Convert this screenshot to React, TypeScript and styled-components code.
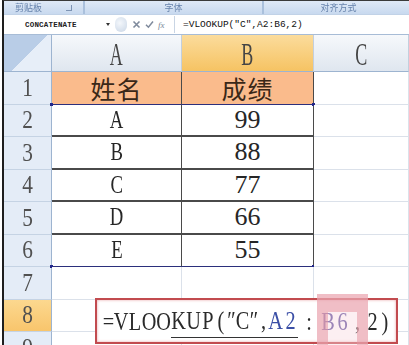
import styled, { createGlobalStyle } from 'styled-components';

const GlobalStyle = createGlobalStyle`
  html, body { margin: 0; padding: 0; background: #fff; overflow: hidden; }
  body { font-family: "Liberation Serif", "DejaVu Serif", serif; }
`;

const Frame = styled.div`
  width: 407px;
  height: 345px;
  margin-left: 2px;
  box-sizing: border-box;
  border-left: 2px solid #1e1e1e;
  border-top: 1px solid #3a3a3a;
  overflow: hidden;
  display: flex;
  flex-direction: column;
  font-family: "Liberation Serif", "DejaVu Serif", serif;
`;

const Ribbon = styled.div`
  height: 13px;
  flex: none;
  display: flex;
  background: linear-gradient(#dfe9f6, #c8d9ef);
`;

const Group = styled.div<{ $w: number }>`
  width: ${({ $w }) => $w}px;
  flex: none;
  display: flex;
  align-items: center;
  justify-content: center;
  border-right: 2px solid #aac0dc;
  font: 9px "Noto Sans CJK SC", sans-serif;
  color: #6783ac;
  filter: blur(0.5px);
`;

const Launcher = styled.span`
  margin-left: 24px;
  width: 5px;
  height: 5px;
  border-right: 1px solid #7d93b3;
  border-bottom: 1px solid #7d93b3;
`;

const FormulaBar = styled.div`
  height: 19px;
  flex: none;
  display: flex;
  align-items: center;
  background: #fff;
  border-top: 1px solid #c1d2e7;
  border-bottom: 1px solid #a7bcd6;
`;

const NameBox = styled.div`
  width: 81px;
  padding-left: 21px;
  font: bold 7.5px "Liberation Mono", monospace;
  color: #222;
  letter-spacing: 0.2px;
`;

const DropArrow = styled.span`
  width: 0;
  height: 0;
  border-left: 2.5px solid transparent;
  border-right: 2.5px solid transparent;
  border-top: 3px solid #333;
  margin-right: 5px;
`;

const Grip = styled.span`
  width: 12px;
  height: 15px;
  border-radius: 7px;
  background: radial-gradient(circle at 40% 40%, #f4f7fb, #c9d6e6);
  margin-right: 5px;
`;

const ToolIcon = styled.svg`
  flex: none;
  margin-right: 4px;
`;

const Fx = styled.span`
  font: italic 9px "Liberation Serif", serif;
  color: #7a8799;
  width: 12px;
  padding-right: 4px;
  border-right: 1px solid #c9d5e4;
  height: 17px;
  display: flex;
  align-items: center;
`;

const FormulaText = styled.div`
  padding-left: 8px;
  font: 9.5px "Liberation Mono", monospace;
  color: #111;
`;

const Sheet = styled.div`
  position: relative;
  flex: none;
  display: grid;
  grid-template-columns: 48px 130px 132px 1fr;
  grid-template-rows: 37px repeat(9, 32.5px);
`;

const Corner = styled.div`
  background: linear-gradient(135deg, #b9cde7 0 52%, #e7eef8 52% 100%);
  border-right: 1px solid #9db4d0;
  border-bottom: 1px solid #9db4d0;
`;

const ColHead = styled.div<{ $active?: boolean }>`
  display: flex;
  align-items: center;
  justify-content: center;
  background: ${({ $active }) =>
    $active ? 'linear-gradient(#fbdc9c, #f6c363)' : 'linear-gradient(#f6f8fb, #dfe6ef)'};
  border-right: 1px solid #c3cfdd;
  border-bottom: 1px solid #9db4d0;
  color: #454545;
  font-size: 31px;
  line-height: 1;
  padding-top: 2px;
  box-sizing: border-box;
`;

const RowHead = styled.div<{ $active?: boolean }>`
  display: flex;
  align-items: center;
  justify-content: center;
  background: ${({ $active }) => ($active ? 'linear-gradient(#fcd88f, #f8c56c)' : '#e4ecf7')};
  border-right: 1px solid #9db4d0;
  border-bottom: 1px solid #c5d3e4;
  color: #505050;
  font-size: 26px;
  line-height: 1;
`;

const lineColor = { navy: '#2b2f7c', dark: '#4a4a4a', grid: '#dbe1ea' };

const Cell = styled.div<{ $fill?: boolean; $right: keyof typeof lineColor; $bottom: keyof typeof lineColor }>`
  position: relative;
  display: flex;
  align-items: center;
  justify-content: center;
  background: ${({ $fill }) => ($fill ? '#fabb8c' : '#fff')};
  border-right: 1px solid ${({ $right }) => lineColor[$right]};
  border-bottom: ${({ $bottom }) => ($bottom === 'dark' ? 2 : 1)}px solid ${({ $bottom }) => lineColor[$bottom]};
  color: #262626;
  font-size: 26px;
  line-height: 1;
`;

const Narrow = styled.span<{ $scale: number }>`
  display: inline-block;
  transform: scaleX(${({ $scale }) => $scale});
`;

const Han = styled.span`
  font: 25px "Noto Sans CJK SC", sans-serif;
  color: #3a2818;
  letter-spacing: 1px;
`;

const Dot = styled.span<{ $top?: boolean; $left?: boolean }>`
  position: absolute;
  width: 3px;
  height: 3px;
  background: #23278a;
  ${({ $top }) => ($top ? 'top: -2px;' : 'bottom: -2px;')}
  ${({ $left }) => ($left ? 'left: -2px;' : 'right: -2px;')}
`;

const Callout = styled.div`
  position: absolute;
  left: 91px;
  top: 263px;
  width: 303px;
  height: 46px;
  box-sizing: border-box;
  border: 2px solid #c24b4f;
  box-shadow: inset 0 0 3px #e9a5a8;
  background: #fff;
  display: flex;
  align-items: center;
  padding: 2px 0 0 6px;
  font-size: 26px;
  color: #2a2a2a;
  white-space: nowrap;
`;

const Glyph = styled.span<{ $w: number; $color?: string }>`
  display: inline-flex;
  justify-content: center;
  width: ${({ $w }) => $w}px;
  transform: scaleX(0.78);
  color: ${({ $color }) => $color || 'inherit'};
`;

const Underlined = styled.span`
  border-bottom: 1px solid #333;
  padding-bottom: 1px;
`;

const Stamp = styled.div`
  position: absolute;
  left: 313px;
  top: 259px;
  width: 29px;
  height: 40px;
  border: solid rgba(230, 150, 162, 0.55);
  border-width: 18px 11px 0 11px;
  background: rgba(247, 214, 222, 0.4);
`;

const rows = [
  { n: '1', a: '姓名', b: '成绩', title: true },
  { n: '2', a: 'A', b: '99' },
  { n: '3', a: 'B', b: '88' },
  { n: '4', a: 'C', b: '77' },
  { n: '5', a: 'D', b: '66' },
  { n: '6', a: 'E', b: '55' },
  { n: '7' },
  { n: '8', active: true },
  { n: '9' },
];

const formula: [string, number, string?][] = [
  ['=', 11], ['V', 14], ['L', 14], ['O', 14], ['O', 15], ['K', 15], ['U', 15], ['P', 14],
  ['(', 12], ['″', 9], ['C', 13], ['″', 10], [',', 9],
  ['A', 15, '#3b4fa6'], ['2', 15, '#3b4fa6'], [':', 22],
  ['B', 16, '#5f4f9e'], ['6', 13, '#5f4f9e'], [',', 17], ['2', 13], [')', 12],
];

const renderGlyphs = (from: number, to: number) =>
  formula.slice(from, to).map(([ch, w, color], i) => (
    <Glyph key={from + i} $w={w} $color={color}>
      {ch}
    </Glyph>
  ));

const bottomOf = (i: number, inTable: boolean) => {
  if (!inTable) return 'grid' as const;
  return i === 0 || i === 5 ? ('navy' as const) : ('dark' as const);
};

const App = () => (
  <>
    <GlobalStyle />
    <Frame>
      <Ribbon>
        <Group $w={79}>
          剪贴板
          <Launcher />
        </Group>
        <Group $w={177}>字体</Group>
        <Group $w={149}>对齐方式</Group>
      </Ribbon>
      <FormulaBar>
        <NameBox>CONCATENATE</NameBox>
        <DropArrow />
        <Grip />
        <ToolIcon width="9" height="9" viewBox="0 0 9 9">
          <path d="M1.5 1.5 L7.5 7.5 M7.5 1.5 L1.5 7.5" stroke="#7f8a9c" strokeWidth="1.6" />
        </ToolIcon>
        <ToolIcon width="9" height="9" viewBox="0 0 9 9">
          <path d="M1 4.8 L3.4 7.2 L8 1.5" stroke="#7f8a9c" strokeWidth="1.5" fill="none" />
        </ToolIcon>
        <Fx>fx</Fx>
        <FormulaText>=VLOOKUP("C",A2:B6,2)</FormulaText>
      </FormulaBar>
      <Sheet>
        <Corner />
        <ColHead>
          <Narrow $scale={0.58}>A</Narrow>
        </ColHead>
        <ColHead $active>
          <Narrow $scale={0.58}>B</Narrow>
        </ColHead>
        <ColHead>
          <Narrow $scale={0.58}>C</Narrow>
        </ColHead>
        {rows.map((r, i) => {
          const inTable = i < 6;
          const right = inTable ? 'dark' : 'grid';
          return [
            <RowHead key={`h${r.n}`} $active={r.active}>
              <Narrow $scale={0.82}>{r.n}</Narrow>
            </RowHead>,
            <Cell key={`a${r.n}`} $fill={r.title} $right={right} $bottom={bottomOf(i, inTable)}>
              {r.title ? <Han>{r.a}</Han> : r.a && <Narrow $scale={0.72}>{r.a}</Narrow>}
              {i === 1 && <Dot $top $left />}
              {i === 5 && <Dot $left />}
            </Cell>,
            <Cell key={`b${r.n}`} $fill={r.title} $right={right} $bottom={bottomOf(i, inTable)}>
              {r.title ? <Han>{r.b}</Han> : r.b}
              {i === 1 && <Dot $top />}
              {i === 5 && <Dot />}
            </Cell>,
            <Cell key={`c${r.n}`} $right="grid" $bottom="grid" />,
          ];
        })}
        <Callout>
          {renderGlyphs(0, 5)}
          <Underlined>{renderGlyphs(5, 15)}</Underlined>
          {renderGlyphs(15, formula.length)}
        </Callout>
        <Stamp />
      </Sheet>
    </Frame>
  </>
);

export default App;
